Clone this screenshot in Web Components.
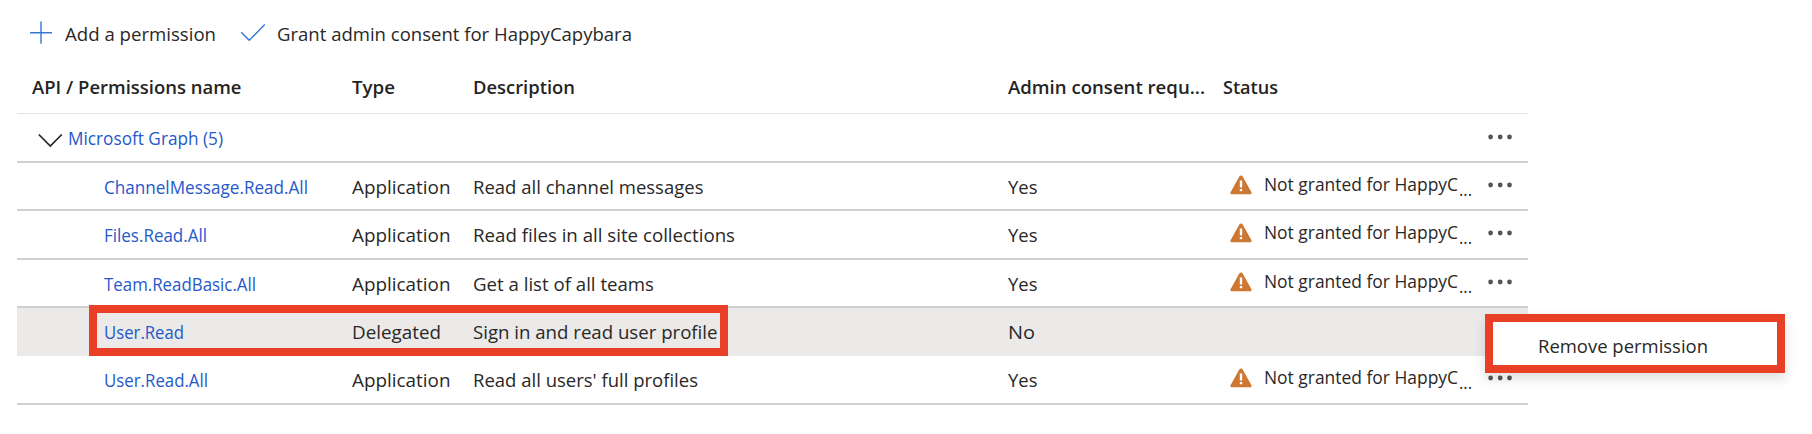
<!DOCTYPE html>
<html lang="en">
<head>
<meta charset="utf-8">
<title>API permissions</title>
<style>
html,body{margin:0;background:#fff}
body{width:1812px;height:434px;overflow:hidden;font-family:"Open Sans","Noto Sans",sans-serif;color:#292827}
</style>
</head>
<body>
<permissions-page></permissions-page>
<script>
const define=(name,html,setup)=>customElements.define(name,class extends HTMLElement{
  connectedCallback(){
    if(this.shadowRoot)return;
    this.attachShadow({mode:'open'}).innerHTML=html;
    if(setup)setup(this,this.shadowRoot);
  }
});

/* Single line of text condensed to the width given in "w". */
define('fit-text',`<style>
:host{display:block;font-size:18.7px;line-height:26px;height:26px;white-space:nowrap;flex:none}
span{display:inline-block;transform-origin:0 0}
</style><span><slot></slot></span>`,(el,root)=>{
  const w=+el.getAttribute('w'),s=root.querySelector('span');
  el.style.width=w+'px';
  s.style.transform='scaleX('+w/s.getBoundingClientRect().width+')';
});

define('command-bar',`<style>
:host{display:flex;height:63px;padding:21px 0 0 29px;box-sizing:border-box;align-items:flex-start}
svg{display:block;flex:none;fill:none;stroke:#3877d6;stroke-width:1.4}
.plus{margin:0 12px 0 0}.check{margin:2px 11px 0 24px}
</style>
<svg class="plus" width="24" height="24"><path d="M1 11.7H23M12 .5V22.8"/></svg>
<fit-text w="151">Add a permission</fit-text>
<svg class="check" width="26" height="22"><path d="M1.2 9.2L9.2 17.2L24.8 1.6"/></svg>
<fit-text w="355">Grant admin consent for HappyCapybara</fit-text>`);

define('table-head',`<style>
:host{display:grid;grid-template-columns:335px 121px 535px 215px 1fr;height:51px;box-sizing:border-box;border-bottom:1px solid #e6e4e3;padding-top:11px;font-weight:600;color:#252423}
.first{margin-left:15px}
</style>
<fit-text class="first" w="209.5">API / Permissions name</fit-text><fit-text w="43">Type</fit-text><fit-text w="102">Description</fit-text><fit-text w="197">Admin consent requ...</fit-text><fit-text w="55">Status</fit-text>`);

define('more-dots',`<style>:host{display:block;width:24px;height:6px}svg{display:block;fill:#555}</style>
<svg width="24" height="6"><circle cx="2.6" cy="3" r="2.4"/><circle cx="12.2" cy="3" r="2.4"/><circle cx="21.5" cy="3" r="2.4"/></svg>`);

define('status-cell',`<style>
:host{display:flex;align-items:flex-start}
svg{display:block;flex:none;margin:12px 12px 0 7px}
fit-text{margin-top:8px}
.dots{margin:13px 0 0 1px}
</style>
<svg width="22" height="20" viewBox="0 0 22 20"><path d="M11 .5q1.1 0 1.7 1.1l8.6 15.5q1 2.1-1.2 2.1H1.9q-2.2 0-1.2-2.1L9.3 1.6Q9.9.5 11 .5z" fill="#cc7832"/><path d="M9.8 5.6h2.4v7H9.8zM9.8 14h2.4v2.3H9.8z" fill="#fff"/></svg>
<fit-text w="194">Not granted for HappyC</fit-text><fit-text class="dots" w="13">...</fit-text>`);

define('group-row',`<style>
:host{display:flex;height:49px;box-sizing:border-box;border-bottom:2px solid #cfcfcf;padding-left:21px}
svg{fill:none;stroke:#252423;stroke-width:1.7;margin:19px 5px 0 0;flex:none}
fit-text{margin-top:11px;color:#2659cb}
more-dots{margin:20px 16px 0 auto}
</style>
<svg width="25" height="16"><path d="M.8 1.5L12.3 13L23.8 1.5"/></svg>
<fit-text w="155">Microsoft Graph (5)</fit-text><more-dots></more-dots>`);

define('permission-row',`<style>
:host{display:grid;grid-template-columns:335px 121px 535px 215px 265px 1fr;height:48px;box-sizing:border-box;border-bottom:2px solid #cfcfcf}
:host([tall]){height:49px}
:host([selected]){background:#ebeae9;border-color:#ebeae9}
.name{margin:11px 0 0 87px;color:#2659cb}
.cell{margin-top:11px}
more-dots{margin:19px 0 0 0}
</style><fit-text class="name"></fit-text><fit-text class="cell type"></fit-text><fit-text class="cell desc"></fit-text><fit-text class="cell consent"></fit-text><status-cell></status-cell><more-dots></more-dots>`,(el,root)=>{
  const fill=(cls)=>{
    const [text,w]=el.getAttribute(cls).split('|'),old=root.querySelector('.'+cls),t=document.createElement('fit-text');
    t.className=old.className;t.setAttribute('w',w);t.textContent=text;old.replaceWith(t);
  };
  ['name','type','desc','consent'].forEach(fill);
  if(el.hasAttribute('selected'))root.querySelectorAll('status-cell,more-dots').forEach(n=>n.remove());
});

define('context-menu',`<style>
:host{position:absolute;left:1485px;top:314px;width:300px;height:59px;box-sizing:border-box;border:8px solid #e83f26;background:#fff;padding:11px 0 0 45px;box-shadow:0 6px 12px rgba(0,0,0,.13)}
</style><fit-text w="170">Remove permission</fit-text>`);

define('highlight-box',`<style>:host{position:absolute;left:89px;top:305px;width:639px;height:51px;box-sizing:border-box;border:8px solid #e83f26}</style>`);

define('permissions-page',`<style>
:host{display:block;position:relative;width:1812px;height:434px}
main{margin-left:17px;width:1511px}
</style>
<command-bar></command-bar>
<main>
<table-head></table-head>
<group-row></group-row>
<permission-row name="ChannelMessage.Read.All|204" type="Application|98.5" desc="Read all channel messages|230.5" consent="Yes|29.5"></permission-row>
<permission-row tall name="Files.Read.All|103" type="Application|98.5" desc="Read files in all site collections|262" consent="Yes|29.5"></permission-row>
<permission-row name="Team.ReadBasic.All|152" type="Application|98.5" desc="Get a list of all teams|181" consent="Yes|29.5"></permission-row>
<permission-row selected name="User.Read|80" type="Delegated|89" desc="Sign in and read user profile|244.5" consent="No|27"></permission-row>
<permission-row tall name="User.Read.All|104" type="Application|98.5" desc="Read all users' full profiles|225" consent="Yes|29.5"></permission-row>
</main>
<highlight-box></highlight-box>
<context-menu></context-menu>`);
</script>
</body>
</html>
